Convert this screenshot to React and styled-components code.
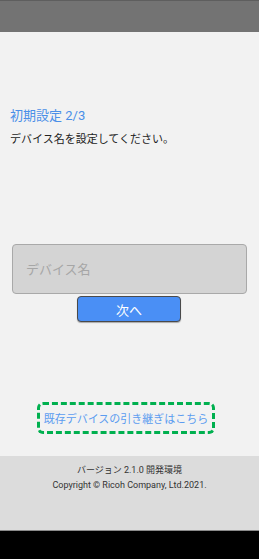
import React from 'react';
import styled, { createGlobalStyle } from 'styled-components';

const GlobalStyle = createGlobalStyle`
  html, body {
    margin: 0;
    padding: 0;
    background: #000;
  }
  body {
    font-family: Roboto, "Noto Sans CJK JP", sans-serif;
  }
`;

const Screen = styled.div`
  width: 259px;
  height: 559px;
  display: flex;
  flex-direction: column;
  background: #000;
  overflow: hidden;
`;

const StatusBar = styled.div`
  height: 32px;
  background: #737373;
  border-top: 1px solid #5e5e5e;
  box-sizing: border-box;
  flex-shrink: 0;
`;

const Main = styled.main`
  height: 424px;
  background: #f2f2f2;
  display: flex;
  flex-direction: column;
  box-sizing: border-box;
  padding: 75px 10px 0 10px;
`;

const Title = styled.h1`
  margin: 0;
  font-size: 13px;
  font-weight: 400;
  color: #4a8fe8;
  line-height: 18px;
`;

const Lead = styled.p`
  margin: 7px 0 0 0;
  font-size: 11px;
  color: #222;
  line-height: 15px;
`;

const Form = styled.div`
  margin-top: 97px;
  display: flex;
  flex-direction: column;
  align-items: center;
  gap: 2px;
`;

const NameInput = styled.input`
  box-sizing: border-box;
  width: 235px;
  height: 50px;
  background: #d4d4d4;
  border: 1px solid #a9a9a9;
  border-radius: 4px;
  padding: 0 13px;
  font-family: inherit;
  font-size: 13px;
  color: #333;
  outline: none;

  &::placeholder {
    color: #a6a6a6;
  }
`;

const NextButton = styled.button`
  box-sizing: border-box;
  width: 104px;
  height: 26px;
  margin-left: -1px;
  background: #4a8ff5;
  border: 1px solid #4a4a4a;
  border-radius: 4px;
  color: #fff;
  font-family: inherit;
  font-size: 13px;
  padding: 0;
  box-shadow: 0 1px 1px rgba(0, 0, 0, 0.3);
`;

const Spacer = styled.div`
  flex: 1;
`;

const TransferLink = styled.a`
  align-self: center;
  margin: 0 0 22px -7px;
  box-sizing: border-box;
  width: 178px;
  height: 32px;
  border: 3px dashed #00b04f;
  border-radius: 6px;
  display: flex;
  align-items: center;
  justify-content: center;
  font-size: 11px;
  color: #5b9cf0;
  text-decoration: none;
`;

const Footer = styled.footer`
  height: 75px;
  background: #dcdcdc;
  display: flex;
  flex-direction: column;
  align-items: center;
  padding-top: 8px;
  box-sizing: border-box;
  flex-shrink: 0;
  border-bottom: 1px solid #8a8a8a;
`;

const FooterLine = styled.div`
  font-size: 9px;
  color: #333;
  line-height: 12px;
  margin-bottom: 3px;
`;

const NavArea = styled.div`
  flex: 1;
  background: #000;
`;

export default function App() {
  return (
    <>
      <GlobalStyle />
      <Screen>
        <StatusBar />
        <Main>
          <Title>初期設定 2/3</Title>
          <Lead>デバイス名を設定してください。</Lead>
          <Form>
            <NameInput placeholder="デバイス名" />
            <NextButton>次へ</NextButton>
          </Form>
          <Spacer />
          <TransferLink href="#">既存デバイスの引き継ぎはこちら</TransferLink>
        </Main>
        <Footer>
          <FooterLine>バージョン 2.1.0 開発環境</FooterLine>
          <FooterLine>Copyright © Ricoh Company, Ltd.2021.</FooterLine>
        </Footer>
        <NavArea />
      </Screen>
    </>
  );
}
